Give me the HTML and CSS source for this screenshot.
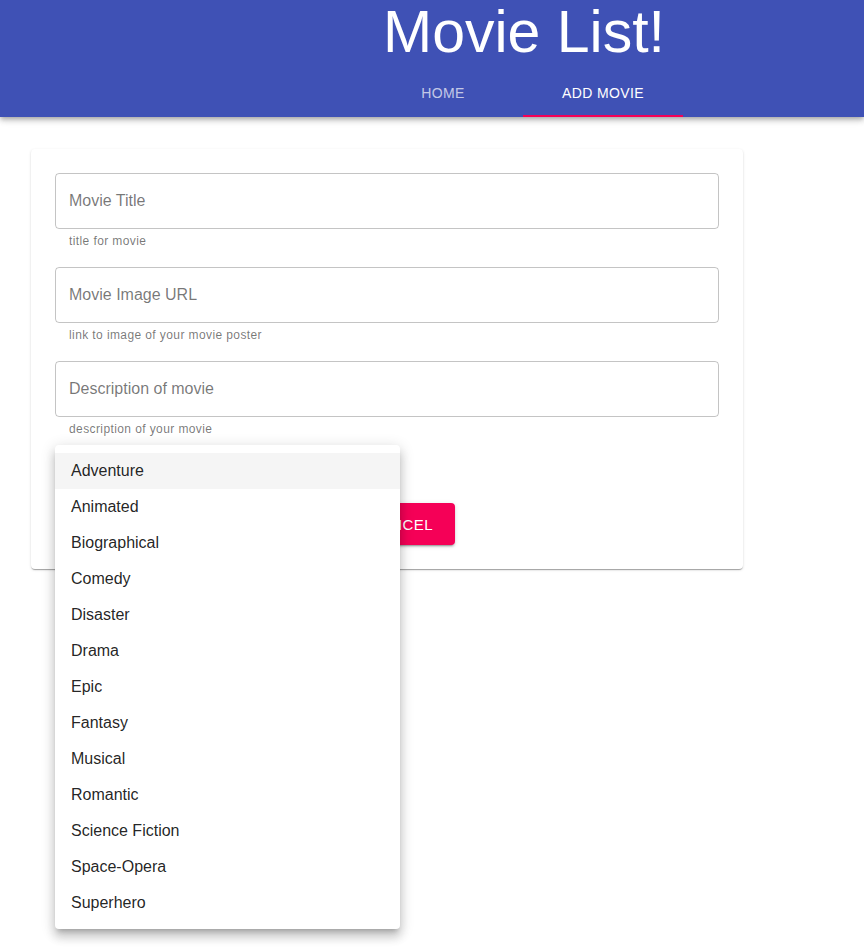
FILE: index.html
```html
<!DOCTYPE html>
<html lang="en">
<head>
<meta charset="utf-8">
<title>Movie List!</title>
<link rel="stylesheet" href="styles.css">
</head>
<body>
<header class="appbar">
  <h1 class="title">Movie List!</h1>
  <nav class="tabs">
    <a class="tab">Home</a>
    <a class="tab active">Add Movie</a>
  </nav>
</header>

<main class="page">
  <form class="card">
    <div class="field">
      <div class="input"><span class="placeholder">Movie Title</span></div>
      <p class="helper">title for movie</p>
    </div>
    <div class="field">
      <div class="input"><span class="placeholder">Movie Image URL</span></div>
      <p class="helper">link to image of your movie poster</p>
    </div>
    <div class="field">
      <div class="input"><span class="placeholder">Description of movie</span></div>
      <p class="helper">description of your movie</p>
    </div>
    <div class="select"></div>
    <div class="actions">
      <button type="button" class="btn primary">Submit</button>
      <button type="button" class="btn secondary">Cancel</button>
    </div>
  </form>
</main>

<ul class="menu">
  <li class="item hover">Adventure</li>
  <li class="item">Animated</li>
  <li class="item">Biographical</li>
  <li class="item">Comedy</li>
  <li class="item">Disaster</li>
  <li class="item">Drama</li>
  <li class="item">Epic</li>
  <li class="item">Fantasy</li>
  <li class="item">Musical</li>
  <li class="item">Romantic</li>
  <li class="item">Science Fiction</li>
  <li class="item">Space-Opera</li>
  <li class="item">Superhero</li>
</ul>
</body>
</html>
```

FILE: styles.css
```css
* { box-sizing: border-box; }

html, body {
  margin: 0;
  padding: 0;
  background: #fff;
  font-family: "Liberation Sans", Arial, sans-serif;
  color: rgba(0, 0, 0, 0.87);
}

body { position: relative; min-height: 952px; }

.appbar {
  background: #3f51b5;
  color: #fff;
  height: 117px;
  padding-left: 184px;
  display: flex;
  flex-direction: column;
  align-items: center;
  box-shadow: 0 2px 4px -1px rgba(0,0,0,0.2), 0 4px 5px 0 rgba(0,0,0,0.14), 0 1px 10px 0 rgba(0,0,0,0.12);
  position: relative;
  z-index: 1;
}

.title {
  margin: 0 0 5px;
  font-size: 59px;
  font-weight: 400;
  line-height: 64px;
}

.tabs {
  display: flex;
  height: 48px;
  margin-left: -2px;
}

.tab {
  width: 160px;
  height: 48px;
  display: flex;
  align-items: center;
  justify-content: center;
  font-size: 14px;
  text-transform: uppercase;
  letter-spacing: 0.4px;
  color: rgba(255, 255, 255, 0.7);
  position: relative;
}

.tab.active { color: #fff; }
.tab.active::after {
  content: "";
  position: absolute;
  left: 0;
  right: 0;
  bottom: 0;
  height: 2px;
  background: #f50057;
}

.page {
  padding: 32px 0 0 31px;
}

.card {
  width: 712px;
  background: #fff;
  border-radius: 4px;
  box-shadow: 0 2px 1px -1px rgba(0,0,0,0.2), 0 1px 1px 0 rgba(0,0,0,0.14), 0 1px 3px 0 rgba(0,0,0,0.12);
  padding: 24px;
  display: flex;
  flex-direction: column;
}

.field { margin-bottom: 16px; }

.input {
  height: 56px;
  border: 1px solid rgba(0, 0, 0, 0.23);
  border-radius: 4px;
  padding: 0 13px;
  display: flex;
  align-items: center;
}

.placeholder {
  font-size: 16px;
  color: rgba(0, 0, 0, 0.54);
}

.helper {
  margin: 2px 14px 0;
  font-size: 12px;
  line-height: 20px;
  letter-spacing: 0.4px;
  color: rgba(0, 0, 0, 0.54);
}

.select {
  height: 32px;
  margin-bottom: 16px;
  border-bottom: 1px solid rgba(0, 0, 0, 0.42);
  width: 345px;
}

.actions {
  display: flex;
  justify-content: flex-end;
  gap: 16px;
  width: 400px;
}

.btn {
  height: 42px;
  padding: 0 22px;
  border: 0;
  border-radius: 4px;
  font-family: inherit;
  font-size: 15px;
  letter-spacing: 0.43px;
  text-transform: uppercase;
  color: #fff;
  box-shadow: 0 3px 1px -2px rgba(0,0,0,0.2), 0 2px 2px 0 rgba(0,0,0,0.14), 0 1px 5px 0 rgba(0,0,0,0.12);
}

.btn.primary { background: #3f51b5; }
.btn.secondary { background: #f50057; }

.menu {
  position: absolute;
  left: 55px;
  top: 445px;
  width: 345px;
  margin: 0;
  padding: 8px 0;
  list-style: none;
  background: #fff;
  border-radius: 4px;
  box-shadow: 0 5px 5px -3px rgba(0,0,0,0.2), 0 8px 10px 1px rgba(0,0,0,0.14), 0 3px 14px 2px rgba(0,0,0,0.12);
  z-index: 2;
}

.item {
  height: 36px;
  padding: 0 16px;
  font-size: 16px;
  line-height: 36px;
  color: rgba(0, 0, 0, 0.87);
}

.item.hover { background: rgba(0, 0, 0, 0.04); }
```
